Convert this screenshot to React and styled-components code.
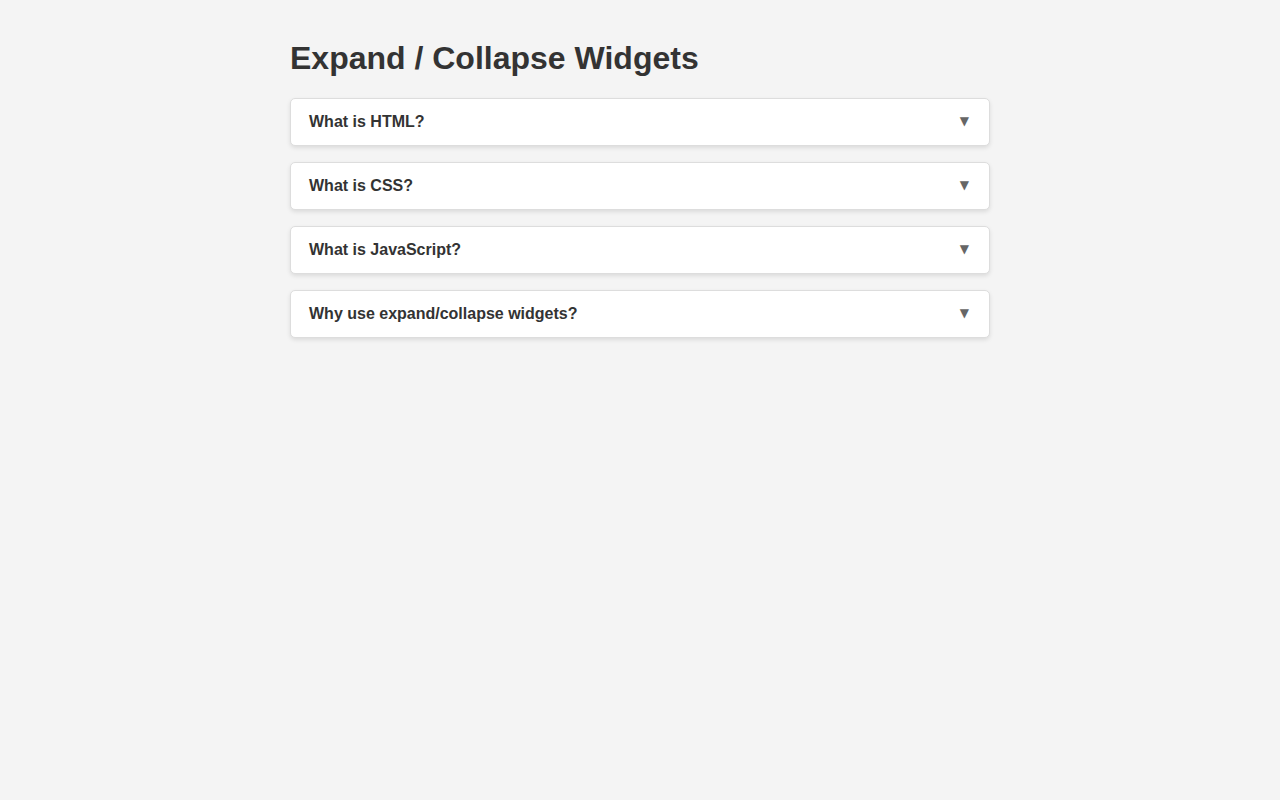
import React from "react";
import styled, { createGlobalStyle } from "styled-components";

const Global = createGlobalStyle`
  html, body { margin: 0; padding: 0; }
  body {
    background: #f4f4f4;
    color: #333;
    font-family: "Liberation Sans", Arial, sans-serif;
    min-height: 800px;
  }
`;

const Container = styled.div`
  width: 700px;
  margin: 0 auto;
  padding-top: 16px;
`;

const Title = styled.h1`
  font-size: 32px;
  font-weight: bold;
  margin: 24px 0 22px;
  line-height: 36px;
  color: #333;
`;

const List = styled.div`
  display: flex;
  flex-direction: column;
  gap: 16px;
`;

const Item = styled.div`
  background: #fff;
  border: 1px solid #ddd;
  border-radius: 5px;
  box-shadow: 0 2px 4px rgba(0, 0, 0, 0.1);
`;

const Header = styled.div`
  display: flex;
  align-items: center;
  justify-content: space-between;
  height: 46px;
  padding: 0 20px 0 18px;
  font-size: 16px;
  font-weight: bold;
  color: #333;
  cursor: pointer;
`;

const Arrow = styled.span`
  font-size: 12px;
  line-height: 12px;
  margin-top: -2px;
  color: #666;
  font-family: "DejaVu Sans", sans-serif;
`;

const items = [
  "What is HTML?",
  "What is CSS?",
  "What is JavaScript?",
  "Why use expand/collapse widgets?",
];

export default function App() {
  return (
    <>
      <Global />
      <Container>
        <Title>Expand / Collapse Widgets</Title>
        <List>
          {items.map((t) => (
            <Item key={t}>
              <Header>
                <span>{t}</span>
                <Arrow>▼</Arrow>
              </Header>
            </Item>
          ))}
        </List>
      </Container>
    </>
  );
}
